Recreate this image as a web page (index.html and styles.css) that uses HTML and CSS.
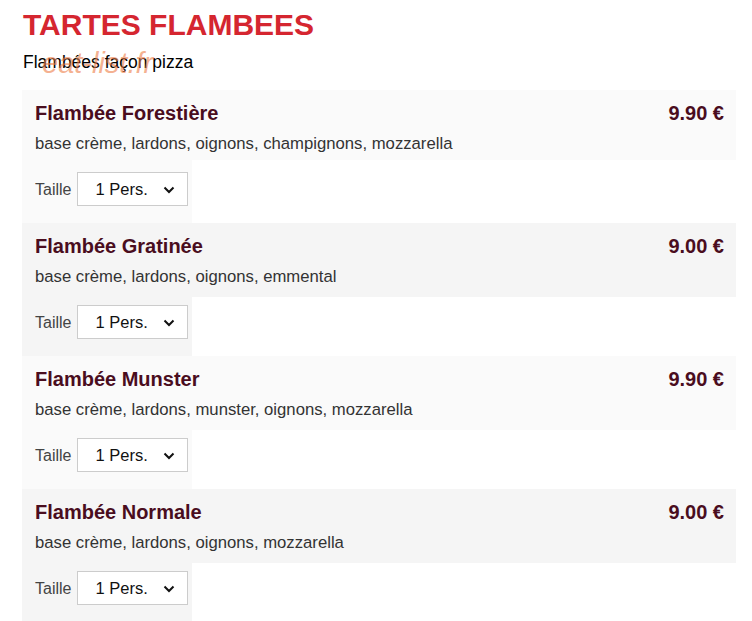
FILE: index.html
```html
<!DOCTYPE html>
<html lang="fr">
<head>
    <meta charset="UTF-8">
    <meta name="viewport" content="width=device-width, initial-scale=1.0">
    <title>Tartes flambées</title>
    <link rel="stylesheet" href="styles.css">
</head>
<body>
    <div class="menu-section">
        <div class="section-head">
            <h2>TARTES FLAMBEES</h2>
            <p class="section-sub">Flambées façon pizza</p>
            <span class="watermark">eat-list.fr</span>
        </div>

        <div class="dish dish-first">
            <div class="dish-top">
                <div class="dish-line">
                    <h3>Flambée Forestière</h3>
                    <span class="price">9.90 €</span>
                </div>
                <p class="dish-desc">base crème, lardons, oignons, champignons, mozzarella</p>
            </div>
            <div class="dish-options">
                <label>Taille</label>
                <div class="size-select">
                    <select><option>1 Pers.</option></select>
                    <svg viewBox="0 0 12 8" width="12" height="8"><path d="M1.5 1.5 L6 6 L10.5 1.5" fill="none" stroke="#111" stroke-width="2"/></svg>
                </div>
            </div>
        </div>

        <div class="dish dish-alt">
            <div class="dish-top">
                <div class="dish-line">
                    <h3>Flambée Gratinée</h3>
                    <span class="price">9.00 €</span>
                </div>
                <p class="dish-desc">base crème, lardons, oignons, emmental</p>
            </div>
            <div class="dish-options">
                <label>Taille</label>
                <div class="size-select">
                    <select><option>1 Pers.</option></select>
                    <svg viewBox="0 0 12 8" width="12" height="8"><path d="M1.5 1.5 L6 6 L10.5 1.5" fill="none" stroke="#111" stroke-width="2"/></svg>
                </div>
            </div>
        </div>

        <div class="dish">
            <div class="dish-top">
                <div class="dish-line">
                    <h3>Flambée Munster</h3>
                    <span class="price">9.90 €</span>
                </div>
                <p class="dish-desc">base crème, lardons, munster, oignons, mozzarella</p>
            </div>
            <div class="dish-options">
                <label>Taille</label>
                <div class="size-select">
                    <select><option>1 Pers.</option></select>
                    <svg viewBox="0 0 12 8" width="12" height="8"><path d="M1.5 1.5 L6 6 L10.5 1.5" fill="none" stroke="#111" stroke-width="2"/></svg>
                </div>
            </div>
        </div>

        <div class="dish dish-alt">
            <div class="dish-top">
                <div class="dish-line">
                    <h3>Flambée Normale</h3>
                    <span class="price">9.00 €</span>
                </div>
                <p class="dish-desc">base crème, lardons, oignons, mozzarella</p>
            </div>
            <div class="dish-options">
                <label>Taille</label>
                <div class="size-select">
                    <select><option>1 Pers.</option></select>
                    <svg viewBox="0 0 12 8" width="12" height="8"><path d="M1.5 1.5 L6 6 L10.5 1.5" fill="none" stroke="#111" stroke-width="2"/></svg>
                </div>
            </div>
        </div>
    </div>
</body>
</html>
```

FILE: styles.css
```css
body {
    font-family: "Liberation Sans", Arial, sans-serif;
    margin: 0;
    padding: 0;
    background: #fff;
    color: #333;
}
.menu-section {
    width: 714px;
    padding: 8px 0 0 22px;
}
.section-head {
    position: relative;
    padding-left: 1px;
    margin-bottom: 19px;
}
.section-head h2 {
    margin: 0;
    font-size: 30px;
    line-height: 34px;
    color: #d52630;
}
.section-sub {
    margin: 11px 0 0;
    font-size: 17.5px;
    line-height: 18px;
    color: #000;
}
/* site mark laid over the subtitle */
.watermark {
    position: absolute;
    left: 20px;
    top: 40px;
    font-size: 29px;
    line-height: 30px;
    font-style: italic;
    color: rgba(238, 125, 70, 0.6);
    pointer-events: none;
}
.dish {
    --dish-bg: #fafafa;
}
.dish-alt {
    --dish-bg: #f5f5f5;
}
.dish-top {
    background-color: var(--dish-bg);
    padding: 11px 12px 11px 13px;
}
.dish-first .dish-top {
    padding-bottom: 7px;
}
.dish-first .dish-options {
    padding-top: 12px;
}
.dish-line {
    display: flex;
    justify-content: space-between;
    align-items: center;
}
.dish-line h3 {
    margin: 0;
    font-size: 20px;
    line-height: 24px;
    color: #4a0d1e;
}
.price {
    font-size: 20px;
    line-height: 24px;
    font-weight: bold;
    color: #4a0d1e;
}
.dish-desc {
    margin: 9px 0 0;
    font-size: 16.7px;
    line-height: 19px;
    color: #333;
}
.dish-options {
    background-color: var(--dish-bg);
    width: fit-content;
    display: flex;
    align-items: center;
    gap: 6px;
    padding: 8px 4px 17px 13px;
}
.dish-options label {
    font-size: 16px;
    line-height: 32px;
    padding-top: 2px;
    color: #444;
}
.size-select {
    position: relative;
}
.size-select select {
    appearance: none;
    -webkit-appearance: none;
    width: 111px;
    height: 34px;
    padding: 0 0 0 17px;
    border: 1px solid #ccc;
    border-radius: 0;
    background: #fff;
    font-family: "Liberation Sans", Arial, sans-serif;
    font-size: 16.5px;
    color: #111;
}
.size-select svg {
    position: absolute;
    right: 13px;
    top: 14px;
    pointer-events: none;
}
```
